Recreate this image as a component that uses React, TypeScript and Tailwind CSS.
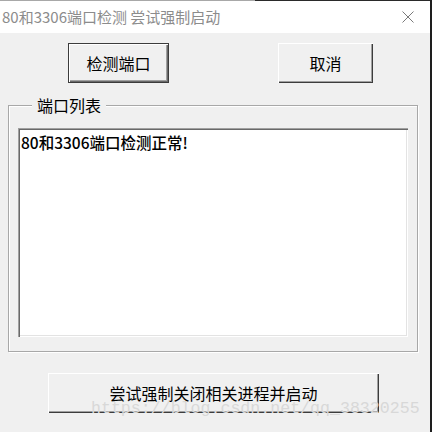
import React from 'react';

const cjk = { fontFamily: '"Noto Sans CJK SC", "Noto Sans", sans-serif' };

// classic raised 3D button
function WinButton({ label, isDefault, className }: { label: string; isDefault?: boolean; className: string }) {
  return (
    <button
      style={cjk}
      className={`${className} flex items-center justify-center text-[16px] leading-none text-black bg-[#f0f0f0] ${
        isDefault
          ? 'border border-[#3c3c3c] shadow-[inset_1px_1px_0_#fff,inset_-1px_-1px_0_#696969,inset_-2px_-2px_0_#a0a0a0]'
          : 'shadow-[inset_1px_1px_0_#fff,inset_-1px_-1px_0_#3c3c3c,inset_-2px_-2px_0_#a0a0a0]'
      }`}
    >
      {label}
    </button>
  );
}

export default function App() {
  return (
    <div className="relative w-[432px] h-[432px] overflow-hidden bg-[#f0f0f0] border-r-2 border-[#1e1e1e] flex flex-col">
      <div className="flex h-px">
        <div className="w-[255px] bg-[#a8a8a8]" />
        <div className="flex-1 bg-[#2a2a2a]" />
      </div>
      {/* title bar */}
      <div className="h-[32px] bg-white flex items-center justify-between pl-[2px] pr-[16px]">
        <span style={cjk} className="text-[15px] text-[#8c8c8c] leading-none -mt-[1px]">
          80和3306端口检测 尝试强制启动
        </span>
        <svg width="12" height="12" viewBox="0 0 12 12" className="-mt-[1px]">
          <path d="M0.5 0.5 L11.5 11.5 M11.5 0.5 L0.5 11.5" stroke="#7a7a7a" strokeWidth="1" />
        </svg>
      </div>

      {/* top buttons */}
      <div className="flex mt-[10px] pl-[68px] gap-[109px]">
        <WinButton label="检测端口" isDefault className="w-[101px] h-[40px]" />
        <WinButton label="取消" className="w-[95px] h-[40px]" />
      </div>

      {/* group box */}
      <fieldset className="ml-[8px] mt-[13px] w-[410px] border border-[#a8a8a8] shadow-[inset_1px_1px_0_#fff,1px_1px_0_#fff] px-[9px] pb-[14px]">
        <legend style={cjk} className="ml-[14px] px-[5px] text-[16px] leading-[18px] text-black bg-[#f0f0f0]">
          端口列表
        </legend>
        <div
          style={cjk}
          className="mt-[14px] h-[209px] bg-white pl-[3px] pt-[5px] text-[15.5px] font-medium leading-[18px] text-black shadow-[inset_1px_1px_0_#a0a0a0,inset_2px_2px_0_#696969,inset_-1px_-1px_0_#fff,inset_-2px_-2px_0_#e3e3e3]"
        >
          80和3306端口检测正常!
        </div>
      </fieldset>

      {/* bottom button */}
      <div className="mt-[21px] pl-[48px]">
        <WinButton label="尝试强制关闭相关进程并启动" className="w-[331px] h-[40px]" />
      </div>

      {/* watermark */}
      <span
        style={{ fontFamily: '"Liberation Mono", monospace' }}
        className="absolute left-[91px] top-[401px] text-[16.6px] leading-none text-[#d8d8d8] pointer-events-none"
      >
        https://blog.csdn.net/qq_38320255
      </span>
    </div>
  );
}
